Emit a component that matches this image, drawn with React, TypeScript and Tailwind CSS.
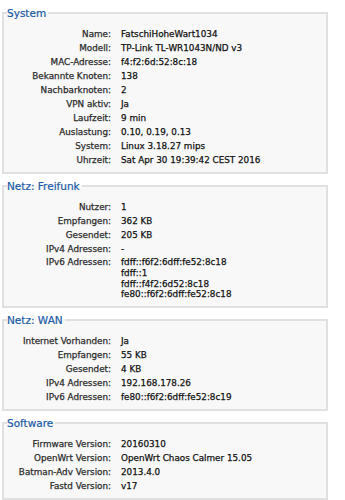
import React from "react";

type Row = { label: string; value: string | string[] };
type Section = { title: string; rows: Row[] };

const sections: Section[] = [
  {
    title: "System",
    rows: [
      { label: "Name:", value: "FatschiHoheWart1034" },
      { label: "Modell:", value: "TP-Link TL-WR1043N/ND v3" },
      { label: "MAC-Adresse:", value: "f4:f2:6d:52:8c:18" },
      { label: "Bekannte Knoten:", value: "138" },
      { label: "Nachbarknoten:", value: "2" },
      { label: "VPN aktiv:", value: "Ja" },
      { label: "Laufzeit:", value: "9 min" },
      { label: "Auslastung:", value: "0.10, 0.19, 0.13" },
      { label: "System:", value: "Linux 3.18.27 mips" },
      { label: "Uhrzeit:", value: "Sat Apr 30 19:39:42 CEST 2016" },
    ],
  },
  {
    title: "Netz: Freifunk",
    rows: [
      { label: "Nutzer:", value: "1" },
      { label: "Empfangen:", value: "362 KB" },
      { label: "Gesendet:", value: "205 KB" },
      { label: "IPv4 Adressen:", value: "-" },
      {
        label: "IPv6 Adressen:",
        value: [
          "fdff::f6f2:6dff:fe52:8c18",
          "fdff::1",
          "fdff::f4f2:6d52:8c18",
          "fe80::f6f2:6dff:fe52:8c18",
        ],
      },
    ],
  },
  {
    title: "Netz: WAN",
    rows: [
      { label: "Internet Vorhanden:", value: "Ja" },
      { label: "Empfangen:", value: "55 KB" },
      { label: "Gesendet:", value: "4 KB" },
      { label: "IPv4 Adressen:", value: "192.168.178.26" },
      { label: "IPv6 Adressen:", value: "fe80::f6f2:6dff:fe52:8c19" },
    ],
  },
  {
    title: "Software",
    rows: [
      { label: "Firmware Version:", value: "20160310" },
      { label: "OpenWrt Version:", value: "OpenWrt Chaos Calmer 15.05" },
      { label: "Batman-Adv Version:", value: "2013.4.0" },
      { label: "Fastd Version:", value: "v17" },
    ],
  },
];

export default function App() {
  return (
    <div className="w-[345px] h-[500px] overflow-hidden bg-white pt-[6px] font-['DejaVu_Sans',sans-serif]">
      {sections.map((s) => (
        <fieldset
          key={s.title}
          className="ml-[2px] mb-[5px] w-[326px] border-2 border-[#e0e0e0] bg-[#f8f8f8] px-[3px] pb-[6px]"
        >
          <legend className="pr-[2px] text-[10.5px] leading-[14px] text-[#1b5aa6] [-webkit-text-stroke:0.2px_#1b5aa6]">
            {s.title}
          </legend>
          <div className="mt-[9px] grid grid-cols-[104px_1fr] gap-x-[10px] gap-y-[3px] text-[8.8px] leading-[11px]">
            {s.rows.map((r) => {
              const multi = Array.isArray(r.value);
              return (
                <React.Fragment key={r.label}>
                  <div
                    className={
                      "text-right text-[#2b2b2b] whitespace-nowrap [-webkit-text-stroke:0.25px_#2b2b2b]" +
                      (multi ? " -mt-[1px]" : "")
                    }
                  >
                    {r.label}
                  </div>
                  <div
                    className={
                      "text-[#111111] whitespace-nowrap [-webkit-text-stroke:0.25px_#111111]" +
                      (multi ? " -mt-[1px] leading-[10.75px]" : "")
                    }
                  >
                    {multi
                      ? (r.value as string[]).map((v) => <div key={v}>{v}</div>)
                      : r.value}
                  </div>
                </React.Fragment>
              );
            })}
          </div>
        </fieldset>
      ))}
    </div>
  );
}
